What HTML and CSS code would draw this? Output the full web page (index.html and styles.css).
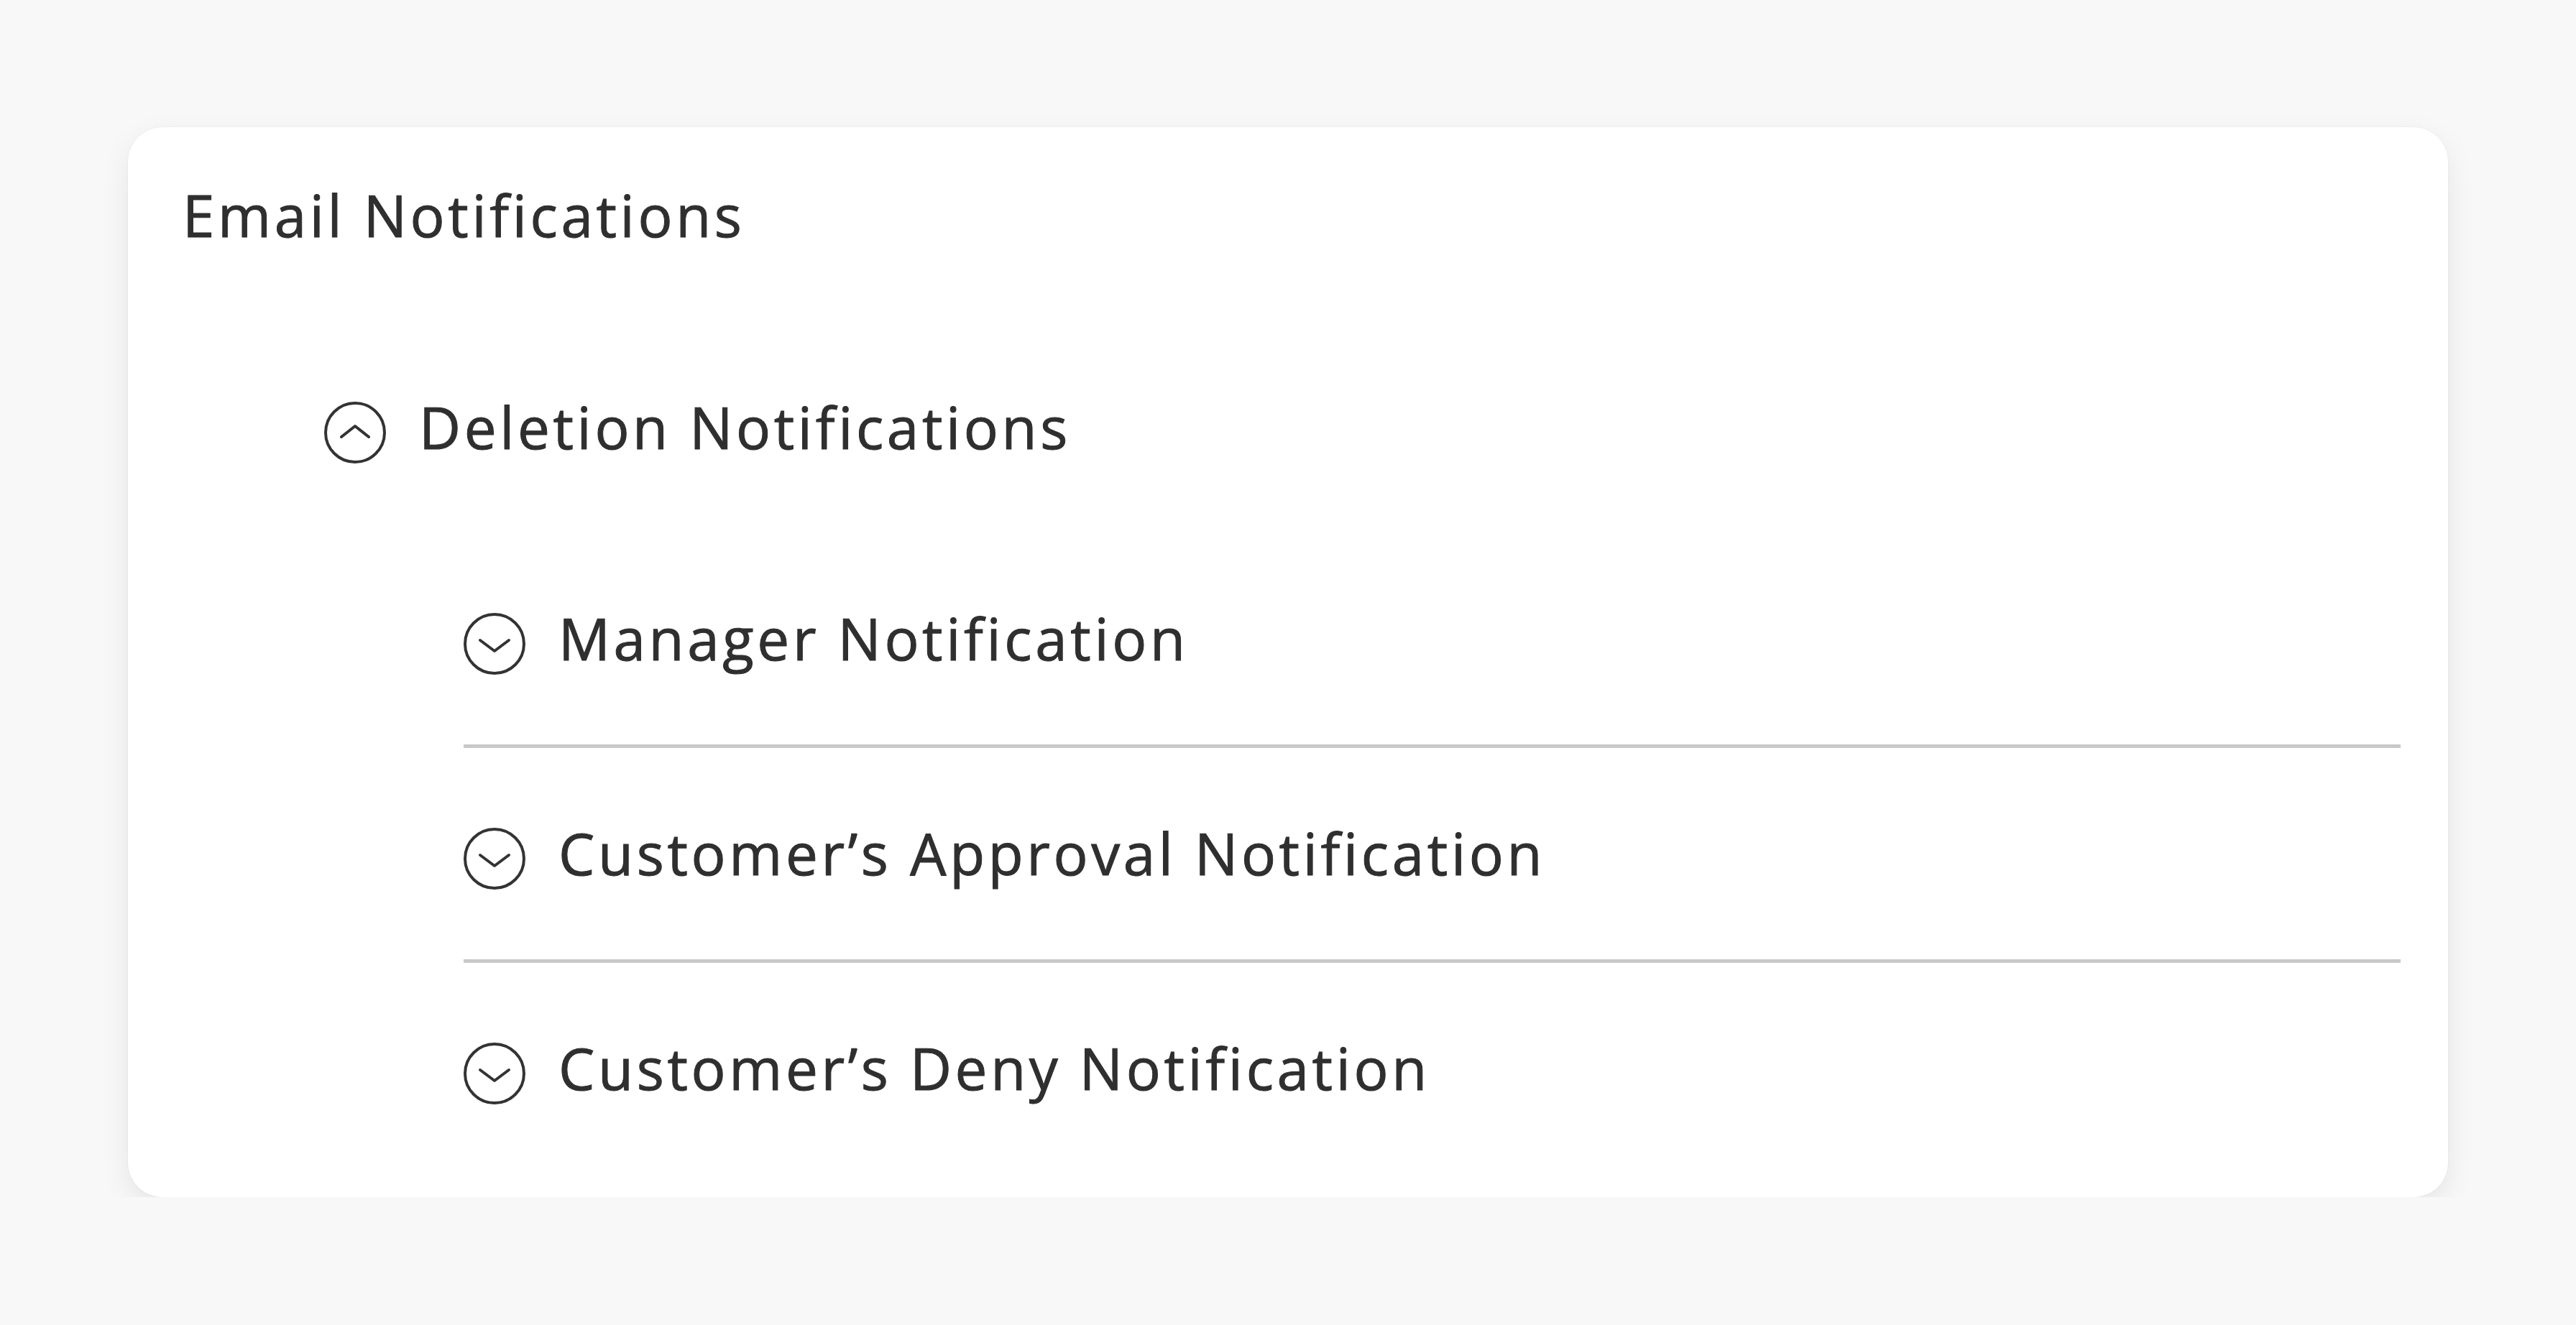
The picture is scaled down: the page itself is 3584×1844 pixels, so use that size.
FILE: index.html
```html
<!DOCTYPE html>
<html lang="en">
<head>
    <meta charset="UTF-8">
    <meta name="viewport" content="width=device-width, initial-scale=1.0">
    <title>Email Notifications</title>
    <link rel="stylesheet" href="styles.css">
</head>
<body>

    <div class="page">
        <div class="card">
            <h2 class="card-title">Email Notifications</h2>

            <div class="group">
                <div class="row">
                    <svg class="toggle" viewBox="0 0 86 86"><circle cx="43" cy="43" r="41"/><polyline points="24,49 43,34 62,49"/></svg>
                    <span class="label">Deletion Notifications</span>
                </div>

                <ul class="items">
                    <li class="item">
                        <div class="row">
                            <svg class="toggle" viewBox="0 0 86 86"><circle cx="43" cy="43" r="41"/><polyline points="23,38 43,53 63,38"/></svg>
                            <span class="label">Manager Notification</span>
                        </div>
                    </li>
                    <li class="item">
                        <div class="row">
                            <svg class="toggle" viewBox="0 0 86 86"><circle cx="43" cy="43" r="41"/><polyline points="23,38 43,53 63,38"/></svg>
                            <span class="label">Customer’s Approval Notification</span>
                        </div>
                    </li>
                    <li class="item">
                        <div class="row">
                            <svg class="toggle" viewBox="0 0 86 86"><circle cx="43" cy="43" r="41"/><polyline points="23,38 43,53 63,38"/></svg>
                            <span class="label">Customer’s Deny Notification</span>
                        </div>
                    </li>
                </ul>
            </div>
        </div>
    </div>

</body>
</html>
```

FILE: styles.css
```css
body { margin: 0; background-color: #f8f8f8; font-family: "Open Sans", "Liberation Sans", sans-serif; color: #2f2f2f; }
.page { padding: 177px 0 0 178px; }
.card { width: 3228px; box-sizing: border-box; padding: 74px 66px 32px 76px; background: #fff; border-radius: 48px; box-shadow: 0 0 2px rgba(0, 0, 0, 0.08), 0 14px 40px rgba(0, 0, 0, 0.08); }
.card-title, .label { font-size: 80px; font-weight: 400; letter-spacing: 4.6px; -webkit-text-stroke: 1px #2f2f2f; }
.card-title { margin: 0; line-height: 96px; }

.group { margin: 212px 0 0 197px; }
.row { display: flex; align-items: center; gap: 46px; }
.toggle { width: 86px; height: 86px; flex-shrink: 0; fill: none; stroke: #333; stroke-width: 4; stroke-linecap: round; stroke-linejoin: round; }
.label { line-height: 70px; padding-bottom: 16px; }

.items { list-style: none; margin: 97px 0 0 194px; padding: 0; }
.item { padding: 111px 0 97px; border-bottom: 5px solid #c9c9c9; }
.item:last-child { border-bottom: none; }
```
